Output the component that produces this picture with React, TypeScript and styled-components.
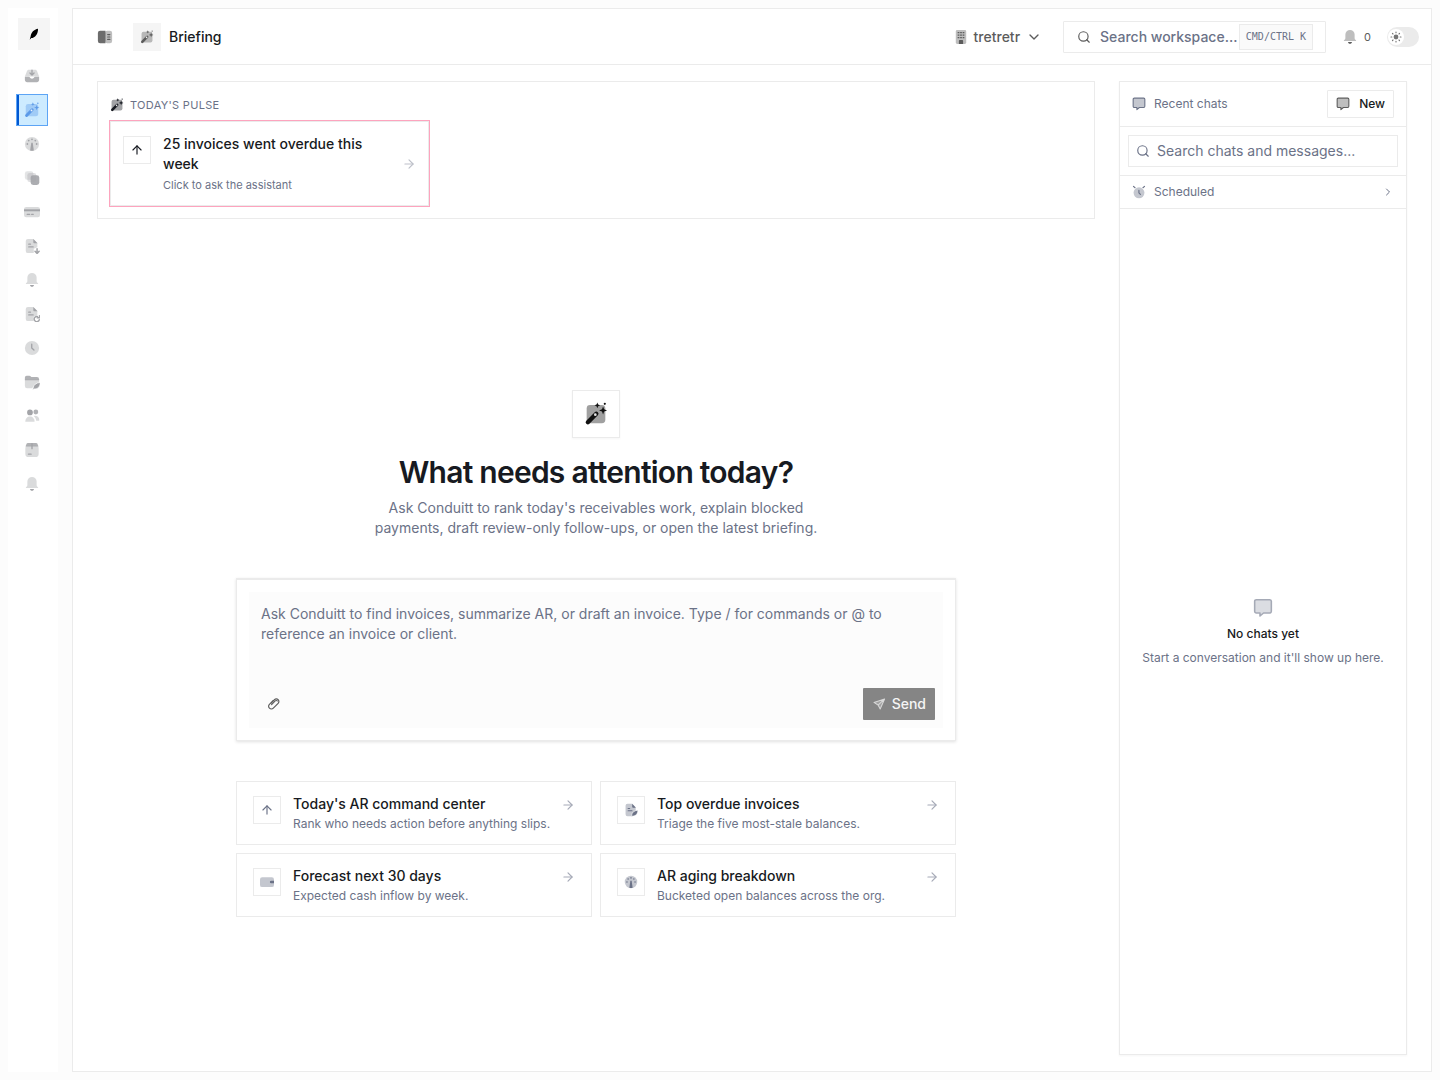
import React from "react";
import styled, { createGlobalStyle, css } from "styled-components";
import { ArrowRight, ArrowUp, ChevronDown, ChevronRight, Search } from "lucide-react";

const color = {
  line: "#ebebeb",
  ink: "#171a21",
  muted: "#6b7287",
  gray: "#5c5c5c",
  soft: "#fcfcfc",
  tint: "#f5f5f5",
};

const GlobalStyle = createGlobalStyle`
  *, *::before, *::after { box-sizing: border-box; }
  body {
    margin: 0;
    background: ${color.soft};
    color: ${color.ink};
    font-family: Inter, "Liberation Sans", sans-serif;
    font-size: 14px;
    line-height: 20px;
  }
  button, input, textarea { font: inherit; color: inherit; }
  button { cursor: pointer; }
  svg { display: block; flex: none; }
  h1, h2, p { margin: 0; }
`;

/* ---------- icons: 18-unit grid, two tones of the current colour ---------- */

type IconProps = { size?: number };

const Svg = ({ size = 16, children }: IconProps & { children: React.ReactNode }) => (
  <svg width={size} height={size} viewBox="0 0 18 18" fill="currentColor" aria-hidden="true">
    {children}
  </svg>
);

const WandIcon = ({ size }: IconProps) => (
  <Svg size={size}>
    <rect x="2" y="2.3" width="14" height="13.7" rx="2.6" opacity=".4" />
    <path d="M2.9 15.2 9.2 8.8" stroke="currentColor" strokeWidth="3.3" strokeLinecap="round" fill="none" />
    <circle cx="8.5" cy="9.5" r="1" fill="#fff" opacity=".9" />
    <path d="M10 .4l.6 1.5 1.5.6-1.5.6L10 4.600l-.6-1.500-1.500-.6 1.500-.6zM14.300 3.300l.8 2.200 2.200.8-2.200.8-.8 2.200-.8-2.200-2.200-.8 2.200-.8z" />
    <circle cx="15.600" cy="1.400" r=".8" />
  </Svg>
);

const FeatherLogo = ({ size }: IconProps) => (
  <Svg size={size}>
    <path d="M15 1C9 2 4.500 6.500 4 12.500L2.500 17.500l2.500-2.500C10.500 15 15.500 8.500 15 1z" />
  </Svg>
);

const InboxIcon = ({ size }: IconProps) => (
  <Svg size={size}>
    <path d="M5.500 2h7c.9 0 1.700.5 2.100 1.400L17 9.500H1l2.400-6.100C3.800 2.500 4.600 2 5.500 2z" opacity=".4" />
    <path d="M1 9.800h4.600c.4 0 .7.3.9.6.4 1 1.300 1.600 2.500 1.600s2.100-.6 2.500-1.600c.2-.3.500-.6.9-.6H17v3.700c0 1.400-1.100 2.500-2.500 2.500h-11C2.100 16 1 14.900 1 13.500z" opacity=".85" />
    <path d="M9 2.500v5.200M6.700 5.700 9 8l2.300-2.300" stroke="currentColor" strokeWidth="1.500" strokeLinecap="round" strokeLinejoin="round" fill="none" />
  </Svg>
);

const GaugeIcon = ({ size }: IconProps) => (
  <Svg size={size}>
    <circle cx="9" cy="9" r="8" opacity=".4" />
    <path d="M8.200 7.500h1.600l1.300 8.800a8 8 0 0 1-4.200 0z" />
    <circle cx="9" cy="3.700" r="1" />
    <circle cx="5.300" cy="5.200" r="1" />
    <circle cx="12.700" cy="5.200" r="1" />
    <circle cx="3.800" cy="9" r="1" />
    <circle cx="14.200" cy="9" r="1" />
  </Svg>
);

const LayersIcon = ({ size }: IconProps) => (
  <Svg size={size}>
    <rect x="1" y="1.500" width="9.500" height="9.500" rx="2.500" opacity=".3" />
    <rect x="3.800" y="3.500" width="10" height="10" rx="2.500" opacity=".35" />
    <rect x="7.500" y="6" width="9.700" height="11" rx="2.800" opacity=".9" />
  </Svg>
);

const CardIcon = ({ size }: IconProps) => (
  <Svg size={size}>
    <rect x="0" y="3.300" width="18" height="11.700" rx="2.500" opacity=".4" />
    <rect x="0" y="6" width="18" height="2.200" />
    <path d="M3.500 11.600h3M8.500 11.600h2" stroke="currentColor" strokeWidth="1.300" strokeLinecap="round" />
  </Svg>
);

const DocBase = () => (
  <>
    <path d="M4.500 1h6L15 5.500v5L11 12v5H4.500A2.500 2.500 0 0 1 2 14.500v-11A2.500 2.500 0 0 1 4.500 1z" opacity=".4" />
    <path d="M10.500 1 15.200 6h-3.500c-.7 0-1.200-.5-1.200-1.200z" />
    <path d="M5.300 7h2M5.300 10h5" stroke="currentColor" strokeWidth="1.400" strokeLinecap="round" />
  </>
);

const DocDownIcon = ({ size }: IconProps) => (
  <Svg size={size}>
    <DocBase />
    <path d="M14.700 12v5M12.400 15l2.300 2.300L17 15" stroke="currentColor" strokeWidth="1.700" strokeLinecap="round" strokeLinejoin="round" fill="none" />
  </Svg>
);

const DocRefreshIcon = ({ size }: IconProps) => (
  <Svg size={size}>
    <DocBase />
    <path d="M17.200 15.500a2.900 2.900 0 1 1-.5-2.600M17.400 11v2.400H15" stroke="currentColor" strokeWidth="1.600" strokeLinecap="round" strokeLinejoin="round" fill="none" />
  </Svg>
);

const DocFeatherIcon = ({ size }: IconProps) => (
  <Svg size={size}>
    <DocBase />
    <path d="M17.800 9.300c-4 .2-7.500 2.400-8 6.400l-.5 2 1.700-1c4 .3 6.800-2.700 6.800-7.400z" stroke="#fff" strokeWidth=".8" />
  </Svg>
);

const FolderFeatherIcon = ({ size }: IconProps) => (
  <Svg size={size}>
    <path d="M1 6h16v3.500L9 16H3.500A2.500 2.500 0 0 1 1 13.500z" opacity=".4" />
    <path d="M1 7V4a2 2 0 0 1 2-2h3c.7 0 1.300.3 1.700.8l.5.7H14.500A2.500 2.500 0 0 1 17 6v1z" opacity=".85" />
    <path d="M18.300 9.500c-4.200.2-7.600 2.500-8.100 6.300l-.5 2 1.700-1c4 .3 6.900-2.600 6.900-7.300z" stroke="#fff" strokeWidth=".8" />
  </Svg>
);

const BellIcon = ({ size }: IconProps) => (
  <Svg size={size}>
    <path d="M9 1a5.200 5.200 0 0 1 5.200 5.200v3.800c0 1.300.7 2 1.500 2.500.5.400.2 1-.3 1H2.600c-.5 0-.8-.6-.3-1 .8-.5 1.500-1.200 1.500-2.500V6.200A5.200 5.200 0 0 1 9 1z" opacity=".4" />
    <path d="M6.800 14.500h4.400c0 1.200-1 2-2.200 2s-2.200-.8-2.200-2z" />
  </Svg>
);

const ClockIcon = ({ size }: IconProps) => (
  <Svg size={size}>
    <circle cx="9" cy="9" r="8" opacity=".4" />
    <path d="M8.700 4.800V9l2.500 2.200" stroke="currentColor" strokeWidth="1.500" strokeLinecap="round" strokeLinejoin="round" fill="none" />
  </Svg>
);

const UsersIcon = ({ size }: IconProps) => (
  <Svg size={size}>
    <circle cx="6.700" cy="5" r="3.200" />
    <circle cx="13.300" cy="4.500" r="2.700" opacity=".85" />
    <path d="M1.500 15.500c0-3.500 2.200-5.800 5.200-5.800s5.200 2.300 5.200 5.800z" opacity=".4" />
    <path d="M12 8.800c3 0 5.200 1.700 5.200 4.600 0 .7-.4 1-1 1h-2.500c-.2-2.200-.9-3.700-2.500-5z" opacity=".4" />
  </Svg>
);

const BoxIcon = ({ size }: IconProps) => (
  <Svg size={size}>
    <path d="M4.300 1h9.400c.6 0 1.100.3 1.400.9L16.300 5H1.700l1.200-3.100c.3-.6.8-.9 1.400-.9z" opacity=".85" />
    <rect x="1.500" y="4" width="15" height="13" rx="3.500" opacity=".4" />
    <path d="M9 2v5.500M5 13.700h3" stroke="currentColor" strokeWidth="1.500" strokeLinecap="round" />
  </Svg>
);

const SidebarIcon = ({ size }: IconProps) => (
  <Svg size={size}>
    <rect x="9" y="2" width="8" height="14" rx="2.500" opacity=".4" />
    <path d="M9.500 2v14h-6A2.500 2.500 0 0 1 1 13.500v-9A2.500 2.500 0 0 1 3.500 2z" opacity=".9" />
    <path d="M12 6.300h2.500M12 9h2.500M12 11.700h2.500" stroke="currentColor" strokeWidth="1.300" strokeLinecap="round" />
  </Svg>
);

const BuildingIcon = ({ size }: IconProps) => (
  <Svg size={size}>
    <rect x="2.300" y="0" width="13.400" height="18" rx="1.800" opacity=".4" />
    <path d="M4.700 3.500h2.200M7.900 3.500h2.200M11.100 3.500h2.200M4.700 6.700h2.200M7.900 6.700h2.200M11.100 6.700h2.200M4.700 9.900h2.200M7.900 9.900h2.200M11.100 9.900h2.200" stroke="currentColor" strokeWidth="1.600" />
    <path d="M6.300 18v-3.700c0-.8.600-1.300 1.300-1.300h2.800c.7 0 1.300.5 1.300 1.300V18z" />
  </Svg>
);

const ChatIcon = ({ size }: IconProps) => (
  <Svg size={size}>
    <path d="M3 1.500h12A1.500 1.500 0 0 1 16.500 3v9a1.500 1.500 0 0 1-1.500 1.500H9.500L6.300 16.200V13.500H3A1.500 1.500 0 0 1 1.500 12V3A1.500 1.500 0 0 1 3 1.500z" opacity=".4" />
    <path d="M3 1.500h12A1.500 1.500 0 0 1 16.500 3v9a1.500 1.500 0 0 1-1.500 1.500H9.500L6.300 16.200V13.500H3A1.500 1.500 0 0 1 1.500 12V3A1.500 1.500 0 0 1 3 1.500z" fill="none" stroke="currentColor" strokeWidth="1.400" strokeLinejoin="round" />
  </Svg>
);

const AlarmIcon = ({ size }: IconProps) => (
  <Svg size={size}>
    <circle cx="9" cy="10" r="7" opacity=".4" />
    <path d="M1.900 1.700l2 1.800M16.100 1.700l-2 1.800M8.900 7v3.200l1.900 1.900" stroke="currentColor" strokeWidth="1.500" strokeLinecap="round" strokeLinejoin="round" fill="none" />
  </Svg>
);

const WalletIcon = ({ size }: IconProps) => (
  <Svg size={size}>
    <rect x="0" y="3" width="18" height="12.500" rx="2.800" opacity=".4" />
    <path d="M18 7.300v3.400h-3.600a1.700 1.700 0 0 1 0-3.400z" />
  </Svg>
);

const SunIcon = ({ size }: IconProps) => (
  <Svg size={size}>
    <circle cx="9" cy="9" r="3.600" />
    <path d="M9 1.500v1.200M9 15.300v1.200M1.500 9h1.200M15.300 9h1.200M3.700 3.700l.8.8M13.500 13.500l.8.8M3.700 14.300l.8-.8M13.500 4.500l.8-.8" stroke="currentColor" strokeWidth="1.700" strokeLinecap="round" />
  </Svg>
);

const ClipIcon = ({ size }: IconProps) => (
  <Svg size={size}>
    <path d="M7.200 9.800l4.600-4.700c.8-.8 2-.8 2.700 0M9.300 4.500 4.400 9.400a3.500 3.500 0 0 0 0 5 3.500 3.500 0 0 0 5 0l6.200-6.300a3.300 3.300 0 0 0 0-4.700 3.300 3.300 0 0 0-4.700 0L6.600 7.800" stroke="currentColor" strokeWidth="1.500" strokeLinecap="round" strokeLinejoin="round" fill="none" />
  </Svg>
);

const PlaneIcon = ({ size }: IconProps) => (
  <Svg size={size}>
    <g opacity=".75">
      <path d="M16.200 2.500 2.500 7l5.300 3.300L10.500 15.500z" opacity=".35" />
      <path d="M16.200 2.500 2.500 7l5.300 3.300L10.500 15.500zM16 2.700 7.800 10.300" stroke="currentColor" strokeWidth="1.300" strokeLinejoin="round" strokeLinecap="round" fill="none" />
    </g>
  </Svg>
);

/* ---------- shell ---------- */

const Shell = styled.div`
  display: flex;
  gap: 14px;
  min-height: 100vh;
  padding: 8px;
`;

const Sidebar = styled.aside`
  flex: none;
  width: 50px;
  background: #fff;
`;

const Logo = styled.a`
  display: grid;
  place-items: center;
  width: 32px;
  height: 32px;
  margin: 10px;
  background: ${color.tint};
  color: #000;
`;

const Nav = styled.nav`
  display: flex;
  flex-direction: column;
  gap: 2px;
  padding: 0 8px;
`;

const NavItem = styled.a<{ $active?: boolean }>`
  display: grid;
  place-items: center;
  width: 32px;
  height: 32px;
  color: #a3a4a8;
  ${(p) =>
    p.$active &&
    css`
      color: #5c9ae8;
      background: #cdebff;
      border: 1px solid #5ca4f5;
      box-shadow: inset 2px 0 0 #0057d1;
    `}
`;

const Main = styled.main`
  display: flex;
  flex: 1;
  min-width: 0;
  flex-direction: column;
  background: #fff;
  border: 1px solid ${color.line};
`;

const Header = styled.header`
  display: flex;
  align-items: center;
  height: 56px;
  padding: 0 12px 0 16px;
  border-bottom: 1px solid ${color.line};
`;

const IconButton = styled.button`
  display: grid;
  place-items: center;
  width: 32px;
  height: 32px;
  padding: 0;
  border: 0;
  background: none;
  color: ${color.gray};
`;

const PageTitle = styled.div`
  display: flex;
  align-items: center;
  gap: 8px;
  margin-left: 12px;
  margin-right: auto;
  font-weight: 500;
`;

const PageBadge = styled.span`
  display: grid;
  place-items: center;
  width: 28px;
  height: 28px;
  background: ${color.tint};
  color: ${color.gray};
`;

const OrgButton = styled.button`
  display: flex;
  align-items: center;
  gap: 6px;
  padding: 0;
  margin-right: 21px;
  border: 0;
  background: none;
  color: ${color.gray};
  font-weight: 500;
`;

const WorkspaceSearch = styled.label`
  display: flex;
  align-items: center;
  gap: 9px;
  width: 263px;
  height: 32px;
  padding: 0 12px 0 13px;
  border: 1px solid ${color.line};
  border-radius: 1px;
  color: ${color.gray};
`;

const BareInput = styled.input`
  flex: 1;
  min-width: 0;
  padding: 0;
  border: 0;
  outline: 0;
  background: none;
  &::placeholder {
    color: ${color.muted};
    opacity: 1;
  }
`;

const SearchField = styled.span`
  display: flex;
  flex: 1;
  align-items: center;
  gap: 2px;
  min-width: 0;
  font-weight: 500;
`;

const Kbd = styled.kbd`
  flex: none;
  height: 26px;
  padding: 0 6px;
  border: 1px solid ${color.line};
  background: #fafafa;
  color: ${color.muted};
  font: 10px/24px "DejaVu Sans Mono", monospace;
  white-space: nowrap;
`;

const Alerts = styled.button`
  display: flex;
  align-items: center;
  gap: 6px;
  margin: 0 16px;
  padding: 0;
  border: 0;
  background: none;
  color: ${color.gray};
  font-size: 11px;
`;

const ThemeSwitch = styled.label`
  display: flex;
  align-items: center;
  width: 32px;
  height: 20px;
  padding: 0 1px;
  border-radius: 10px;
  background: ${color.line};
  color: #757575;
`;

const HiddenCheck = styled.input`
  appearance: none;
  width: 0;
  height: 0;
  margin: 0;
`;

const Knob = styled.span`
  display: grid;
  place-items: center;
  width: 16px;
  height: 16px;
  border-radius: 50%;
  background: #fff;
`;

const Body = styled.div`
  display: flex;
  flex: 1;
  gap: 24px;
  padding: 16px 24px;
`;

const Workspace = styled.div`
  display: flex;
  flex: 1;
  min-width: 0;
  flex-direction: column;
`;

/* ---------- pulse ---------- */

const Pulse = styled.section`
  display: flex;
  flex-direction: column;
  gap: 5px;
  padding: 12px;
  border: 1px solid ${color.line};
`;

const PulseLabel = styled.h2`
  display: flex;
  align-items: center;
  gap: 6px;
  height: 22px;
  color: ${color.muted};
  font-size: 11px;
  font-weight: 400;
  letter-spacing: 0.3px;
  text-transform: uppercase;
  svg {
    color: ${color.ink};
  }
`;

const PulseGrid = styled.div`
  display: grid;
  grid-template-columns: repeat(3, 1fr);
  gap: 8px;
`;

const cardBase = css`
  display: flex;
  align-items: flex-start;
  gap: 8px;
  min-width: 0;
  border: 1px solid ${color.line};
  background: #fff;
  text-align: left;
`;

const PulseCard = styled.button`
  ${cardBase}
  padding: 12px;
  box-shadow: 0 0 0 1px #fda4be;
`;

const ActionCard = styled.button`
  ${cardBase}
  padding: 12px 16px;
`;

const CardIconBox = styled.span<{ $strong?: boolean }>`
  display: grid;
  flex: none;
  place-items: center;
  width: 28px;
  height: 28px;
  margin-top: 2px;
  margin-right: 4px;
  border: 1px solid ${color.line};
  color: ${(p) => (p.$strong ? color.ink : color.muted)};
`;

const CardText = styled.span<{ $loose?: boolean }>`
  display: flex;
  flex: 1;
  min-width: 0;
  flex-direction: column;
  gap: ${(p) => (p.$loose ? 3 : 2)}px;
`;

const CardTitle = styled.span`
  font-weight: 500;
`;

const CardNote = styled.span<{ $small?: boolean }>`
  color: ${color.muted};
  font-size: ${(p) => (p.$small ? 11 : 12)}px;
  line-height: 16px;
`;

const CardArrow = styled.span<{ $centered?: boolean }>`
  align-self: ${(p) => (p.$centered ? "center" : "flex-start")};
  margin-top: ${(p) => (p.$centered ? 0 : 4)}px;
  color: ${(p) => (p.$centered ? "#bdc0c9" : "#a6aab7")};
`;

/* ---------- hero ---------- */

const Hero = styled.section`
  display: flex;
  flex: 1;
  flex-direction: column;
  align-items: center;
  justify-content: center;
  padding-top: 33px;
`;

const HeroIcon = styled.span`
  display: grid;
  place-items: center;
  width: 48px;
  height: 48px;
  border: 1px solid ${color.line};
  box-shadow: 0 1px 2px rgba(0, 0, 0, 0.04);
  color: #111;
`;

const HeroTitle = styled.h1`
  margin-top: 16px;
  font-size: 30px;
  line-height: 36px;
  font-weight: 600;
  letter-spacing: -0.75px;
`;

const HeroText = styled.p`
  max-width: 448px;
  margin-top: 8px;
  color: ${color.muted};
  text-align: center;
`;

const Composer = styled.form`
  width: 100%;
  max-width: 720px;
  margin: 40px 0;
  padding: 12px;
  border: 1px solid ${color.line};
  border-top-width: 2px;
  box-shadow: 0 1px 3px rgba(0, 0, 0, 0.12);
`;

const ComposerInner = styled.div`
  background: ${color.soft};
`;

const Prompt = styled.textarea`
  display: block;
  width: 100%;
  height: 96px;
  padding: 12px;
  border: 0;
  outline: 0;
  resize: none;
  background: none;
  &::placeholder {
    color: ${color.muted};
    opacity: 1;
  }
`;

const ComposerBar = styled.div`
  display: flex;
  align-items: center;
  justify-content: space-between;
  padding: 0 8px 8px;
`;

const SendButton = styled.button`
  display: flex;
  align-items: center;
  gap: 6px;
  height: 32px;
  padding: 0 9px;
  border: 0;
  border-radius: 1px;
  background: #858585;
  color: #f5f5f5;
  font-weight: 500;
`;

const ActionGrid = styled.div`
  display: grid;
  grid-template-columns: repeat(2, 1fr);
  gap: 8px;
  width: 100%;
  max-width: 720px;
`;

/* ---------- chats ---------- */

const Chats = styled.aside`
  display: flex;
  flex: none;
  flex-direction: column;
  width: 288px;
  border: 1px solid ${color.line};
  box-shadow: 0 1px 2px rgba(0, 0, 0, 0.04);
  font-size: 12px;
  line-height: 16px;
`;

const ChatsHead = styled.div`
  display: flex;
  align-items: center;
  justify-content: space-between;
  height: 45px;
  padding: 0 12px;
  border-bottom: 1px solid ${color.line};
`;

const ChatsLabel = styled.span`
  display: flex;
  align-items: center;
  gap: 8px;
  color: ${color.muted};
`;

const NewButton = styled.button`
  display: flex;
  align-items: center;
  gap: 9px;
  height: 28px;
  padding: 0 8px;
  border: 1px solid ${color.line};
  border-radius: 1px;
  background: #fff;
  font-weight: 500;
  svg {
    color: ${color.gray};
  }
`;

const ChatsSearch = styled.div`
  padding: 8px;
  border-bottom: 1px solid ${color.line};
`;

const ChatsField = styled.label`
  display: flex;
  align-items: center;
  gap: 7px;
  height: 32px;
  padding: 0 7px;
  border: 1px solid ${color.line};
  color: ${color.muted};
  font-size: 14px;
  line-height: 20px;
`;

const ScheduledRow = styled.button`
  display: flex;
  align-items: center;
  justify-content: space-between;
  height: 33px;
  padding: 0 12px;
  border: 0;
  border-bottom: 1px solid ${color.line};
  background: none;
  color: ${color.muted};
`;

const Empty = styled.div`
  display: flex;
  flex: 1;
  flex-direction: column;
  align-items: center;
  justify-content: center;
  gap: 8px;
  color: ${color.muted};
`;

const EmptyIcon = styled.span`
  opacity: 0.6;
`;

const EmptyTitle = styled.p`
  color: ${color.ink};
  font-weight: 500;
`;

/* ---------- data ---------- */

const navItems = [
  { label: "Inbox", Icon: InboxIcon },
  { label: "Briefing", Icon: WandIcon },
  { label: "Dashboard", Icon: GaugeIcon },
  { label: "Collections", Icon: LayersIcon },
  { label: "Payments", Icon: CardIcon },
  { label: "Invoices", Icon: DocDownIcon },
  { label: "Reminders", Icon: BellIcon },
  { label: "Recurring", Icon: DocRefreshIcon },
  { label: "Time", Icon: ClockIcon },
  { label: "Projects", Icon: FolderFeatherIcon },
  { label: "Clients", Icon: UsersIcon },
  { label: "Products", Icon: BoxIcon },
  { label: "Notifications", Icon: BellIcon },
];

const actions = [
  { title: "Today's AR command center", note: "Rank who needs action before anything slips.", icon: <ArrowUp size={14} strokeWidth={2} /> },
  { title: "Top overdue invoices", note: "Triage the five most-stale balances.", icon: <DocFeatherIcon size={14} /> },
  { title: "Forecast next 30 days", note: "Expected cash inflow by week.", icon: <WalletIcon size={14} /> },
  { title: "AR aging breakdown", note: "Bucketed open balances across the org.", icon: <GaugeIcon size={14} /> },
];

export default function App() {
  return (
    <>
      <GlobalStyle />
      <Shell>
        <Sidebar>
          <Logo href="#" aria-label="Conduitt">
            <FeatherLogo size={12} />
          </Logo>
          <Nav aria-label="Main">
            {navItems.map(({ label, Icon }) => (
              <NavItem key={label} href="#" aria-label={label} $active={label === "Briefing"}>
                <Icon size={16} />
              </NavItem>
            ))}
          </Nav>
        </Sidebar>

        <Main>
          <Header>
            <IconButton type="button" aria-label="Toggle sidebar">
              <SidebarIcon size={16} />
            </IconButton>
            <PageTitle>
              <PageBadge>
                <WandIcon size={14} />
              </PageBadge>
              Briefing
            </PageTitle>
            <OrgButton type="button">
              <BuildingIcon size={14} />
              tretretr
              <ChevronDown size={16} strokeWidth={2} />
            </OrgButton>
            <WorkspaceSearch>
              <Search size={14} strokeWidth={2} />
              <SearchField>
                <BareInput type="text" placeholder="Search workspace..." aria-label="Search workspace" />
                <Kbd>CMD/CTRL K</Kbd>
              </SearchField>
            </WorkspaceSearch>
            <Alerts type="button" aria-label="Notifications: 0">
              <BellIcon size={16} />
              <span>0</span>
            </Alerts>
            <ThemeSwitch>
              <HiddenCheck type="checkbox" role="switch" aria-label="Dark theme" />
              <Knob>
                <SunIcon size={12} />
              </Knob>
            </ThemeSwitch>
          </Header>

          <Body>
            <Workspace>
              <Pulse>
                <PulseLabel>
                  <WandIcon size={14} />
                  Today's pulse
                </PulseLabel>
                <PulseGrid>
                  <PulseCard type="button">
                    <CardIconBox $strong>
                      <ArrowUp size={14} strokeWidth={2} />
                    </CardIconBox>
                    <CardText $loose>
                      <CardTitle>25 invoices went overdue this week</CardTitle>
                      <CardNote $small>Click to ask the assistant</CardNote>
                    </CardText>
                    <CardArrow $centered>
                      <ArrowRight size={14} strokeWidth={2} />
                    </CardArrow>
                  </PulseCard>
                </PulseGrid>
              </Pulse>

              <Hero>
                <HeroIcon>
                  <WandIcon size={24} />
                </HeroIcon>
                <HeroTitle>What needs attention today?</HeroTitle>
                <HeroText>
                  Ask Conduitt to rank today's receivables work, explain blocked payments, draft review-only follow-ups, or open the latest
                  briefing.
                </HeroText>
                <Composer onSubmit={(e) => e.preventDefault()}>
                  <ComposerInner>
                    <Prompt
                      aria-label="Message"
                      placeholder="Ask Conduitt to find invoices, summarize AR, or draft an invoice. Type / for commands or @ to reference an invoice or client."
                    />
                    <ComposerBar>
                      <IconButton type="button" aria-label="Attach file">
                        <ClipIcon size={14} />
                      </IconButton>
                      <SendButton type="submit">
                        <PlaneIcon size={14} />
                        Send
                      </SendButton>
                    </ComposerBar>
                  </ComposerInner>
                </Composer>
                <ActionGrid>
                  {actions.map((a) => (
                    <ActionCard key={a.title} type="button">
                      <CardIconBox>{a.icon}</CardIconBox>
                      <CardText>
                        <CardTitle>{a.title}</CardTitle>
                        <CardNote>{a.note}</CardNote>
                      </CardText>
                      <CardArrow>
                        <ArrowRight size={14} strokeWidth={2} />
                      </CardArrow>
                    </ActionCard>
                  ))}
                </ActionGrid>
              </Hero>
            </Workspace>

            <Chats>
              <ChatsHead>
                <ChatsLabel>
                  <ChatIcon size={14} />
                  Recent chats
                </ChatsLabel>
                <NewButton type="button">
                  <ChatIcon size={14} />
                  New
                </NewButton>
              </ChatsHead>
              <ChatsSearch>
                <ChatsField>
                  <Search size={14} strokeWidth={2} />
                  <BareInput type="text" placeholder="Search chats and messages..." aria-label="Search chats and messages" />
                </ChatsField>
              </ChatsSearch>
              <ScheduledRow type="button">
                <ChatsLabel>
                  <AlarmIcon size={14} />
                  Scheduled
                </ChatsLabel>
                <ChevronRight size={12} strokeWidth={2} />
              </ScheduledRow>
              <Empty>
                <EmptyIcon>
                  <ChatIcon size={20} />
                </EmptyIcon>
                <EmptyTitle>No chats yet</EmptyTitle>
                <p>Start a conversation and it'll show up here.</p>
              </Empty>
            </Chats>
          </Body>
        </Main>
      </Shell>
    </>
  );
}
